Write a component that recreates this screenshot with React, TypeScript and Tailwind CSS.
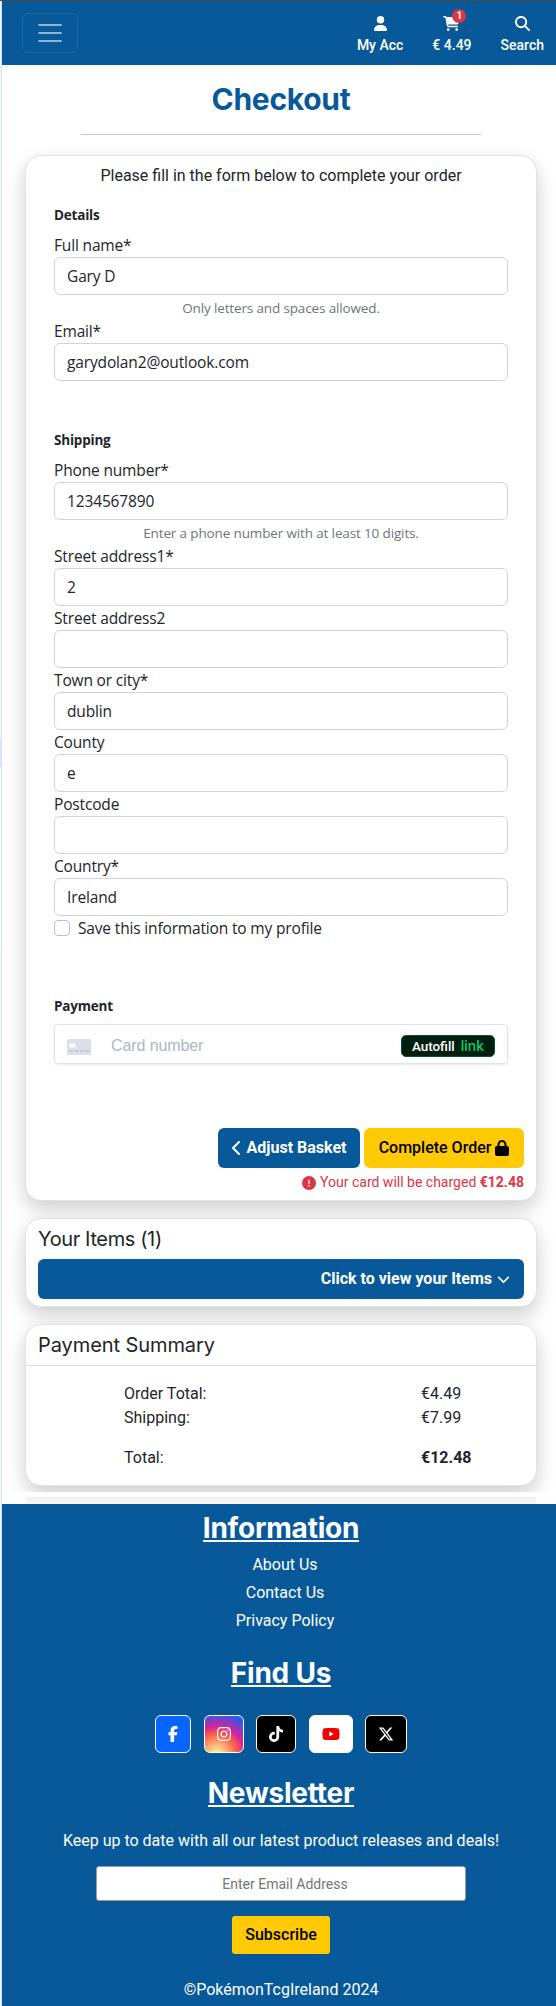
import type { ReactNode } from 'react';
import {
  FaCartShopping,
  FaChevronDown,
  FaChevronLeft,
  FaCircleExclamation,
  FaFacebookF,
  FaInstagram,
  FaLock,
  FaMagnifyingGlass,
  FaTiktok,
  FaUser,
  FaXTwitter,
  FaYoutube,
} from 'react-icons/fa6';

function NavItem({ icon, label }: { icon: ReactNode; label: string }) {
  return (
    <a className="flex flex-col items-center text-sm leading-[21px] font-medium text-white">
      <span className="relative flex h-[15px] items-center">{icon}</span>
      <span className="mt-1">{label}</span>
    </a>
  );
}

function Header() {
  return (
    <header className="flex h-16 items-center justify-between bg-[#075999] pr-4 pl-5">
      <button aria-label="Menu" className="flex h-10 w-14 items-center justify-center rounded-md border border-white/10">
        <svg viewBox="0 0 30 30" className="size-[30px]" fill="none" stroke="rgba(255,255,255,0.55)" strokeWidth="2" strokeLinecap="round">
          <path d="M4 7h22M4 15h22M4 23h22" />
        </svg>
      </button>
      <nav className="flex gap-[29px] pt-[5px]">
        <NavItem icon={<FaUser className="h-[15px] w-[13px]" />} label="My Acc" />
        <NavItem
          icon={
            <>
              <FaCartShopping className="h-[15px] w-[17px]" />
              <span className="absolute -top-[7px] left-[9px] flex size-[14px] items-center justify-center rounded-full bg-[#dc3545] text-[10px] leading-none font-bold">
                1
              </span>
            </>
          }
          label="€ 4.49"
        />
        <NavItem icon={<FaMagnifyingGlass className="size-[15px]" />} label="Search" />
      </nav>
    </header>
  );
}

function Legend({ children }: { children: ReactNode }) {
  return (
    <legend className="mb-[7px] block h-[22px] pt-px text-[13.5px] leading-[21px] font-bold tracking-[-0.2px]">{children}</legend>
  );
}

function Field({ label, value, help }: { label: string; value?: string; help?: string }) {
  return (
    <div>
      <label className="block h-6 text-[15.5px] leading-6 tracking-[-0.16px]">{label}</label>
      <div className="flex h-[38px] items-center rounded-md border border-[#ced4da] bg-white px-3 pt-px text-[15.5px] tracking-[-0.14px]">
        {value}
      </div>
      {help && <div className="h-6 pt-[3px] text-center text-[13.5px] leading-[21px] tracking-[-0.14px] text-[#6c757d]">{help}</div>}
    </div>
  );
}

function CardField() {
  return (
    <div className="flex h-10 items-center rounded border border-[#dfe3ea] px-3 shadow-[0_1px_3px_0_#e6ebf1]">
      <svg viewBox="0 0 24 16" className="mt-[6px] h-4 w-6">
        <rect width="24" height="16" rx="1.6" fill="#dcdfe8" />
        <rect x="2.5" y="4.2" width="6" height="4.4" rx="0.8" fill="#fff" />
        <path d="M2.6 12h3.8M7.8 12h3.8M13 12h3.8M18.2 12h3.8" stroke="#bcc2cf" strokeWidth="1.3" />
      </svg>
      <span className="ml-5 flex-1 pt-1 font-['Liberation_Sans',sans-serif] text-base tracking-[-0.1px] text-[#aab7c4]">Card number</span>
      <span className="mt-[3px] flex h-[22px] w-[94px] items-center justify-center gap-[6px] rounded-[5px] border border-[#00542f] bg-[#011e0f]">
        <span className="pt-[2px] font-['Roboto',sans-serif] text-[13.4px] leading-5 font-medium text-white">Autofill</span>
        <span className="font-['Inter',sans-serif] text-[14px] leading-5 font-medium text-[#00d66f]">link</span>
      </span>
    </div>
  );
}

const cardShadow = 'rounded-2xl border border-[#dee2e6] bg-white shadow-[0_8px_20px_rgba(0,0,0,0.2)]';

function CheckoutForm() {
  return (
    <section className={`h-[1046px] px-7 pt-2 ${cardShadow}`}>
      <p className="text-center leading-6">Please fill in the form below to complete your order</p>
      <form className="font-['Open_Sans',sans-serif]">
        <fieldset className="mt-4">
          <Legend>Details</Legend>
          <Field label="Full name*" value="Gary D" help="Only letters and spaces allowed." />
          <Field label="Email*" value="garydolan2@outlook.com" />
        </fieldset>
        <fieldset className="mt-12">
          <Legend>Shipping</Legend>
          <Field label="Phone number*" value="1234567890" help="Enter a phone number with at least 10 digits." />
          <Field label="Street address1*" value="2" />
          <Field label="Street address2" />
          <Field label="Town or city*" value="dublin" />
          <Field label="County" value="e" />
          <Field label="Postcode" />
          <Field label="Country*" value="Ireland" />
          <label className="flex h-6 items-center text-[15.5px] leading-6 tracking-[-0.16px]">
            <span className="mr-2 size-4 rounded border border-[#bfbfbf]" />
            Save this information to my profile
          </label>
        </fieldset>
        <fieldset className="mt-[55px]">
          <Legend>Payment</Legend>
          <CardField />
        </fieldset>
      </form>
      <div className="-mr-4 mt-16 flex justify-end gap-1">
        <button className="flex h-10 w-[142px] items-center justify-center gap-[5px] rounded-md bg-[#075999] font-bold text-white">
          <FaChevronLeft className="h-4 w-[10px]" />
          Adjust Basket
        </button>
        <button className="flex h-10 w-40 items-center justify-center gap-1 rounded-md bg-[#ffca03] font-medium text-black">
          Complete Order
          <FaLock className="h-4 w-[14px]" />
        </button>
      </div>
      <p className="-mr-4 mt-1 flex items-center justify-end text-sm leading-[21px] text-[#dc3545]">
        <FaCircleExclamation className="mr-1 size-[14px]" />
        Your card will be charged&nbsp;<strong>€12.48</strong>
      </p>
    </section>
  );
}

function Items() {
  return (
    <section className={`mt-[17px] h-[89px] px-3 pt-2 ${cardShadow}`}>
      <h2 className="font-['Inter',sans-serif] text-[20px] leading-6 tracking-[-0.38px]">Your Items (1)</h2>
      <button className="mt-2 flex h-10 w-full items-center justify-end gap-[5px] rounded-md bg-[#075999] pr-[14px] font-bold text-white">
        Click to view your Items
        <FaChevronDown className="h-4 w-[13px]" />
      </button>
    </section>
  );
}

function Summary() {
  return (
    <section className={`mt-[17px] h-[162px] ${cardShadow}`}>
      <h2 className="h-[41px] border-b border-[#d9dcdf] px-3 pt-2 font-['Inter',sans-serif] text-[20px] leading-6 tracking-[-0.08px]">
        Payment Summary
      </h2>
      <dl className="grid grid-cols-[297px_1fr] pt-4 pl-[98px] leading-6">
        <dt>Order Total:</dt>
        <dd>€4.49</dd>
        <dt>Shipping:</dt>
        <dd>€7.99</dd>
        <dt className="mt-4">Total:</dt>
        <dd className="mt-4 font-bold">€12.48</dd>
      </dl>
    </section>
  );
}

function FooterHeading({ children }: { children: ReactNode }) {
  return (
    <h2 className="flex h-[33px] items-start justify-center font-['Inter',sans-serif] text-[28px] font-bold tracking-[-0.22px]">
      <span className="h-[32px] border-b-2 border-white leading-[37px]">{children}</span>
    </h2>
  );
}

const social = 'flex h-[38px] items-center justify-center rounded-md border border-white';

function Footer() {
  return (
    <footer className="flex h-[502px] flex-col items-center bg-[#075999] pt-[6px] text-white">
      <FooterHeading>Information</FooterHeading>
      <ul className="mt-2 pl-2 text-center leading-7">
        <li>About Us</li>
        <li>Contact Us</li>
        <li>Privacy Policy</li>
      </ul>
      <div className="mt-5">
        <FooterHeading>Find Us</FooterHeading>
      </div>
      <div className="mt-[27px] flex gap-[12.5px]">
        <a className={`w-9 bg-[#0866ff] ${social}`}>
          <FaFacebookF className="h-4 w-[10px]" />
        </a>
        <a
          className={`w-10 bg-[radial-gradient(circle_at_30%_107%,#fdf497_0%,#fdf497_5%,#fd5949_45%,#d6249f_60%,#285aeb_90%)] ${social}`}
        >
          <FaInstagram className="size-4" />
        </a>
        <a className={`w-10 bg-black ${social}`}>
          <FaTiktok className="h-4 w-[14px]" />
        </a>
        <a className={`w-11 bg-white text-[#f00000] ${social}`}>
          <FaYoutube className="h-4 w-[18px]" />
        </a>
        <a className={`w-[42px] bg-black ${social}`}>
          <FaXTwitter className="size-4" />
        </a>
      </div>
      <div className="mt-[22px]">
        <FooterHeading>Newsletter</FooterHeading>
      </div>
      <p className="mt-[21px] leading-6">Keep up to date with all our latest product releases and deals!</p>
      <div className="mt-[13px] flex h-[35px] w-[370px] items-center justify-center rounded-[3px] border border-[#9a9a9a] bg-white pl-2 text-sm text-[#757575]">
        Enter Email Address
      </div>
      <button className="mt-[15px] h-[38px] w-[98px] rounded-[3px] bg-[#ffca03] font-medium text-black">Subscribe</button>
      <p className="mt-6 leading-6">©PokémonTcgIreland 2024</p>
    </footer>
  );
}

export default function App() {
  return (
    <div className="flex h-[2006px] w-[556px] flex-col overflow-hidden bg-white font-['Roboto',sans-serif] text-base text-[#212529]">
      <div className="h-px shrink-0 bg-[#4a4a4a]" />
      <div className="flex flex-1">
        <div className="flex w-[2px] shrink-0 flex-col border-r border-[#d3e2fb] bg-[#f4f6fa]">
          <div className="mt-[738px] h-[28px] bg-[#dbe5fb]" />
          <div className="h-[183px] bg-white" />
        </div>
        <div className="w-[558px] shrink-0">
          <div className="h-[1491px] overflow-hidden">
            <Header />
            <main className="px-[23px]">
              <h1 className="pt-[14px] text-center font-['Inter',sans-serif] text-[30px] leading-[40px] font-bold tracking-[-0.3px] text-[#075999]">
                Checkout
              </h1>
              <hr className="mx-auto mt-[15px] mb-5 w-[400px] border-t border-[#c7c8c9]" />
              <CheckoutForm />
              <Items />
              <Summary />
            </main>
          </div>
          <div className="h-[5px]" />
          <div className="mx-6 h-[7px] bg-linear-to-b from-[#efefef] to-[#f9f9f9] shadow-[0_0_8px_rgba(0,0,0,0.02)]" />
          <Footer />
        </div>
      </div>
    </div>
  );
}
